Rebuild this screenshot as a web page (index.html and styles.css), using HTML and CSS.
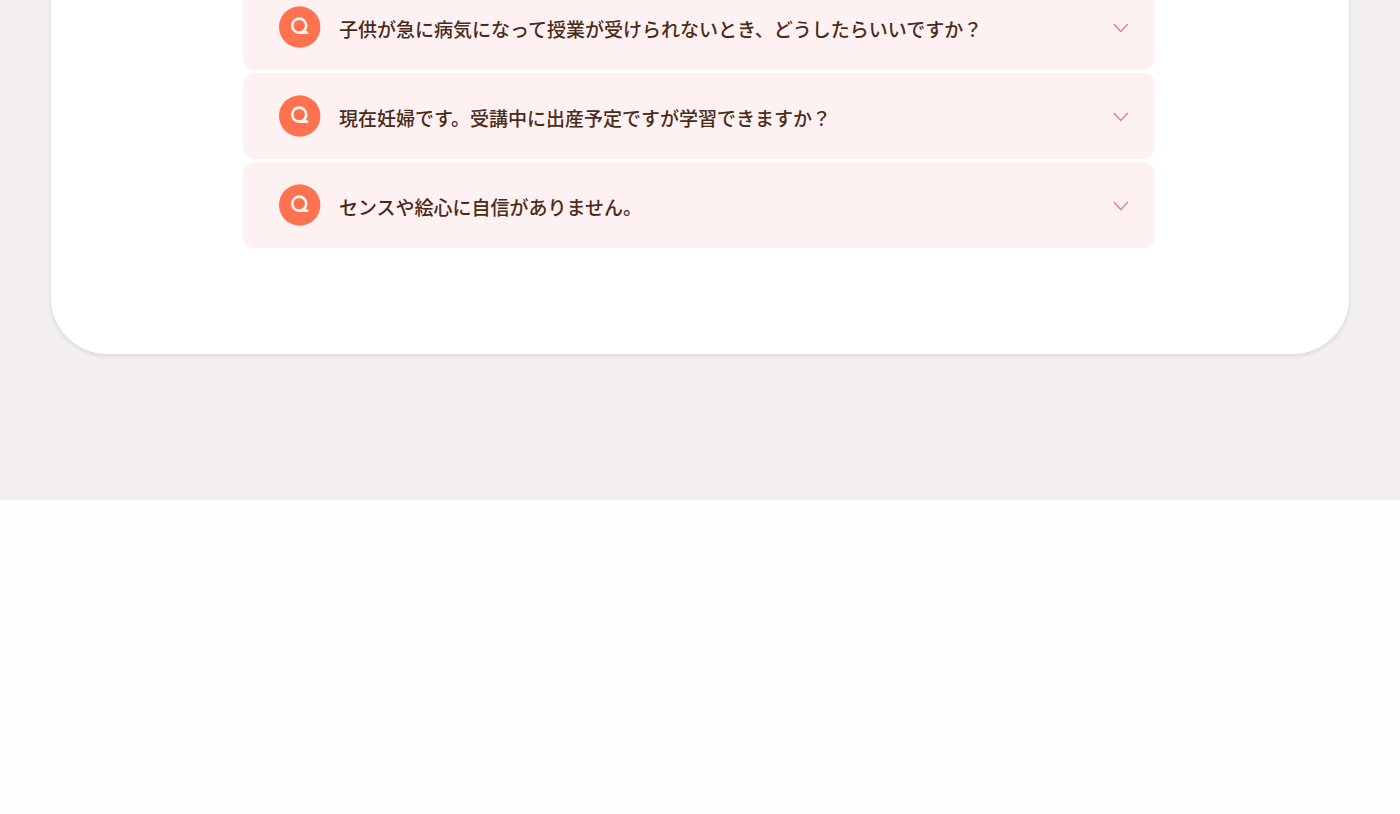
FILE: index.html
```html
<!DOCTYPE html>
<html lang="ja">
<head>
<meta charset="utf-8">
<meta name="viewport" content="width=device-width, initial-scale=1">
<title>よくある質問</title>
<link rel="stylesheet" href="styles.css">
</head>
<body>
<svg class="sprite" aria-hidden="true">
  <symbol id="mark" viewBox="0 0 42 42">
    <circle cx="20.7" cy="21" r="20.7" fill="#ff7250"/>
    <circle cx="20.2" cy="19.6" r="7" fill="none" stroke="#fff4ee" stroke-width="2.6"/>
    <path d="M20 26.7H29.2M24.6 23.8L27.2 26.6" fill="none" stroke="#fff4ee" stroke-width="2.4"/>
  </symbol>
  <symbol id="chevron" viewBox="0 0 16 10">
    <path d="M0.8 1L7.8 8.5L14.8 1" fill="none" stroke="#dc8672" stroke-width="1.4"/>
  </symbol>
</svg>
<main class="faq">
  <div class="card">
    <ul class="list">
      <li><button class="question" type="button" aria-expanded="false">
        <svg class="mark" aria-hidden="true"><use href="#mark"/></svg>
        <span class="label">子供が急に病気になって授業が受けられないとき、どうしたらいいですか？</span>
        <svg class="chevron" aria-hidden="true"><use href="#chevron"/></svg>
      </button></li>
      <li><button class="question" type="button" aria-expanded="false">
        <svg class="mark" aria-hidden="true"><use href="#mark"/></svg>
        <span class="label">現在妊婦です。受講中に出産予定ですが学習できますか？</span>
        <svg class="chevron" aria-hidden="true"><use href="#chevron"/></svg>
      </button></li>
      <li><button class="question" type="button" aria-expanded="false">
        <svg class="mark" aria-hidden="true"><use href="#mark"/></svg>
        <span class="label">センスや絵心に自信がありません。</span>
        <svg class="chevron" aria-hidden="true"><use href="#chevron"/></svg>
      </button></li>
    </ul>
  </div>
</main>
</body>
</html>
```

FILE: styles.css
```css
* {
  box-sizing: border-box;
}

body {
  margin: 0;
  background: #fefefe;
  color: #4a2b1a;
  font-family: "Noto Sans CJK JP", sans-serif;
}

.sprite {
  position: absolute;
  width: 0;
  height: 0;
}

.faq {
  display: flow-root;
  overflow: hidden;
  padding: 0 51px 146px;
  background: #f3eff0;
}

.card {
  display: flow-root;
  padding: 0 26px 106px 24px;
  border-radius: 0 0 56px 56px;
  background: #fff;
  box-shadow: 0 2px 4px rgba(0, 0, 0, 0.1);
}

/* The first question is partly scrolled past the top edge. */
.list {
  display: grid;
  gap: 3px;
  max-width: 912px;
  margin: -16px auto 0;
  padding: 0;
  list-style: none;
}

.question {
  display: flex;
  align-items: center;
  gap: 18px;
  width: 100%;
  min-height: 86px;
  padding: 0 26px 0 36px;
  border: 0;
  border-radius: 12px;
  background: #fef1f1;
  color: inherit;
  font: inherit;
  text-align: left;
  cursor: pointer;
}

.mark {
  flex: none;
  width: 42px;
  height: 42px;
}

.label {
  flex: 1;
  padding-top: 4px;
  font-size: 19px;
  font-weight: 500;
  line-height: 28px;
}

.chevron {
  flex: none;
  width: 16px;
  height: 10px;
  margin-top: 2px;
}
```
